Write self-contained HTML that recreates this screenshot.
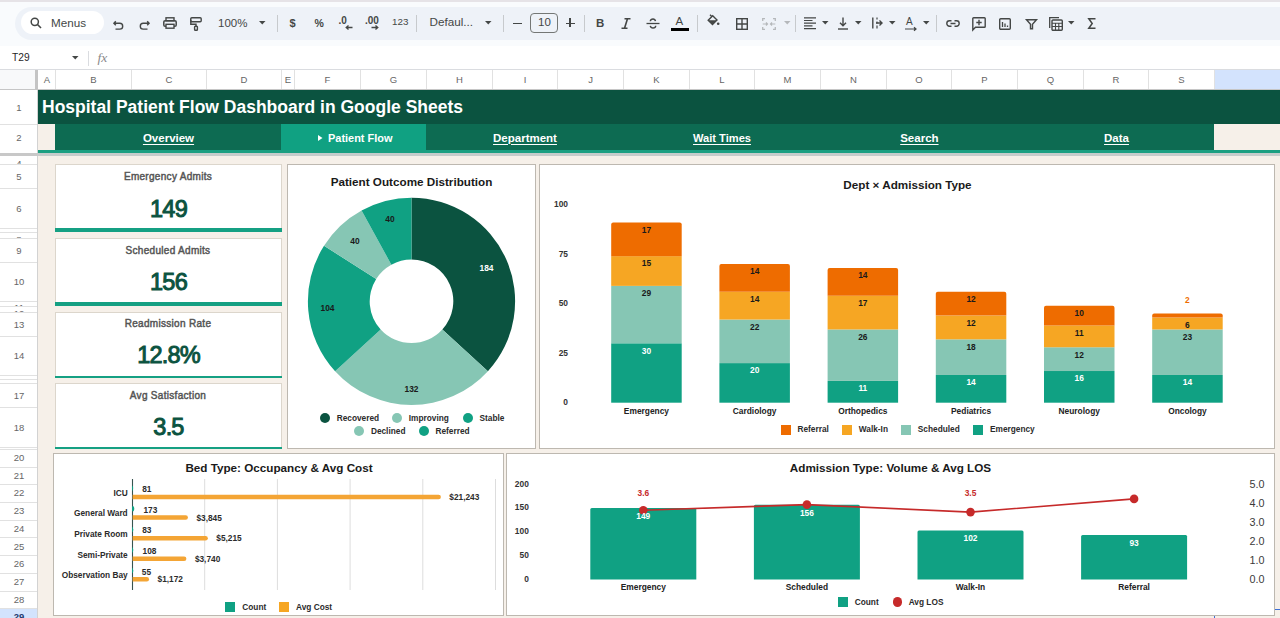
<!DOCTYPE html><html><head><meta charset="utf-8"><style>
*{margin:0;padding:0;box-sizing:border-box}
html,body{width:1280px;height:618px;overflow:hidden;background:#fff;font-family:"Liberation Sans",sans-serif}
.a{position:absolute}
.t{position:absolute;white-space:nowrap}
svg{position:absolute;overflow:visible}
svg text{font-family:"Liberation Sans",sans-serif}
</style></head><body>
<div class="a" style="left:0px;top:0px;width:1280px;height:46px;background:#f9fbfd;"></div>
<div class="a" style="left:0px;top:0px;width:1280px;height:1.5px;background:#e6e3e7;"></div>
<div class="a" style="left:15px;top:7px;width:1300px;height:33px;background:#eef2f8;border-radius:17px"></div>
<div class="a" style="left:21px;top:11px;width:83px;height:23px;background:#ffffff;border-radius:12px"></div>
<svg style="left:30px;top:17px;" width="12" height="12" viewBox="0 0 12 12"><circle cx="4.8" cy="4.8" r="3.6" fill="none" stroke="#444746" stroke-width="1.5"/><path d="M7.5 7.5L11 11" stroke="#444746" stroke-width="1.6"/></svg>
<div class="t" style="left:51px;top:16.5px;font-size:11.7px;color:#444746;font-weight:normal;line-height:1;">Menus</div>
<svg style="left:113px;top:19.5px;" width="11" height="10" viewBox="0 0 11 10"><path d="M2.8 1.2L0.9 3.3L2.8 5.3M1 3.3H6.8a2.9 2.9 0 0 1 0 5.8H2.5" fill="none" stroke="#444746" stroke-width="1.4"/></svg>
<svg style="left:139px;top:19.5px;" width="11" height="10" viewBox="0 0 11 10"><path d="M8.2 1.2L10.1 3.3L8.2 5.3M10 3.3H4.2a2.9 2.9 0 0 0 0 5.8H8.5" fill="none" stroke="#444746" stroke-width="1.4"/></svg>
<svg style="left:163px;top:17px;" width="14" height="12" viewBox="0 0 14 12"><rect x="3" y="0.8" width="8" height="3" fill="none" stroke="#444746" stroke-width="1.4"/><rect x="0.8" y="3.8" width="12.4" height="5.5" rx="1.3" fill="none" stroke="#444746" stroke-width="1.5"/><rect x="3" y="7.3" width="8" height="3.9" fill="#eef2f8" stroke="#444746" stroke-width="1.4"/></svg>
<svg style="left:190px;top:17px;" width="12" height="14" viewBox="0 0 12 14"><rect x="0.8" y="0.8" width="10.4" height="4" rx="1" fill="none" stroke="#444746" stroke-width="1.4"/><path d="M1 3H0.8V7.3H6V9.5" fill="none" stroke="#444746" stroke-width="1.4"/><rect x="4.6" y="9.2" width="2.8" height="4" rx="0.8" fill="none" stroke="#444746" stroke-width="1.4"/></svg>
<div class="t" style="left:218px;top:18.3px;font-size:11.5px;color:#444746;font-weight:normal;line-height:1;">100%</div>
<svg style="left:259px;top:21px;" width="7" height="4" viewBox="0 0 7 4"><path d="M0 0H6.5L3.25 3.6Z" fill="#444746"/></svg>
<div class="a" style="left:277px;top:15px;width:1px;height:17px;background:#c7cacd;"></div>
<div class="t" style="left:289.5px;top:17.5px;font-size:11px;color:#444746;font-weight:normal;line-height:1;"><b>$</b></div>
<div class="t" style="left:314.5px;top:17.5px;font-size:10.5px;color:#444746;font-weight:normal;line-height:1;"><b>%</b></div>
<div class="t" style="left:338.5px;top:15.5px;font-size:10px;color:#444746;font-weight:normal;line-height:1;"><b>.0</b></div>
<svg style="left:345px;top:25px;" width="8" height="5" viewBox="0 0 8 5"><path d="M7.5 2.5H1.5M3.5 0.5L1.2 2.5L3.5 4.5" fill="none" stroke="#444746" stroke-width="1.3"/></svg>
<div class="t" style="left:365px;top:15.5px;font-size:10px;color:#444746;font-weight:normal;line-height:1;"><b>.00</b></div>
<svg style="left:371px;top:25px;" width="8" height="5" viewBox="0 0 8 5"><path d="M0.5 2.5H6.5M4.5 0.5L6.8 2.5L4.5 4.5" fill="none" stroke="#444746" stroke-width="1.3"/></svg>
<div class="t" style="left:392px;top:16.6px;font-size:9.8px;color:#444746;font-weight:normal;line-height:1;">123</div>
<div class="a" style="left:416px;top:15px;width:1px;height:17px;background:#c7cacd;"></div>
<div class="t" style="left:429.5px;top:15.9px;font-size:11.7px;color:#444746;font-weight:normal;line-height:1;">Defaul...</div>
<svg style="left:485px;top:21px;" width="7" height="4" viewBox="0 0 7 4"><path d="M0 0H6.5L3.25 3.6Z" fill="#444746"/></svg>
<div class="a" style="left:503px;top:15px;width:1px;height:17px;background:#c7cacd;"></div>
<div class="a" style="left:512.5px;top:22.5px;width:9px;height:1.2px;background:#444746;"></div>
<div class="a" style="left:530px;top:13px;width:28px;height:20px;background:transparent;border:1px solid #747775;border-radius:4px"></div>
<div class="t" style="left:538px;top:17.3px;font-size:11.5px;color:#444746;font-weight:normal;line-height:1;">10</div>
<div class="a" style="left:565.5px;top:22.5px;width:9px;height:1.3px;background:#444746;"></div>
<div class="a" style="left:569.4px;top:18.3px;width:1.3px;height:9px;background:#444746;"></div>
<div class="a" style="left:584px;top:15px;width:1px;height:17px;background:#c7cacd;"></div>
<div class="t" style="left:596px;top:18.3px;font-size:11.5px;color:#444746;font-weight:normal;line-height:1;"><b>B</b></div>
<svg style="left:621px;top:18px;" width="10" height="11" viewBox="0 0 10 11"><path d="M3.5 0.8H9.5M0.5 10.2H6.5M6.5 0.8L3.5 10.2" fill="none" stroke="#444746" stroke-width="1.6"/></svg>
<svg style="left:646px;top:18px;" width="14" height="11" viewBox="0 0 14 11"><path d="M0.5 5.5H13.5" stroke="#444746" stroke-width="1.3"/><path d="M9.5 3.2C9.2 1.8 8 1 7 1C5.5 1 4.3 1.8 4.3 3.2M4.3 7.8C4.6 9.2 5.8 10 7 10C8.4 10 9.7 9.2 9.7 7.8" fill="none" stroke="#444746" stroke-width="1.4"/></svg>
<div class="t" style="left:675.5px;top:16.3px;font-size:11.5px;color:#444746;font-weight:normal;line-height:1;">A</div>
<div class="a" style="left:671px;top:28px;width:18px;height:2.6px;background:#000;"></div>
<div class="a" style="left:697px;top:15px;width:1px;height:17px;background:#c7cacd;"></div>
<svg style="left:707px;top:14px;" width="13" height="12" viewBox="0 0 13 12"><path d="M3 0.8L4.5 2.3M1.2 6.2L5.7 1.7L10 6L5.5 10.5Z" fill="none" stroke="#444746" stroke-width="1.4"/><path d="M1.5 6.3H9.7L5.5 10.3Z" fill="#444746"/><circle cx="11.2" cy="9.8" r="1.3" fill="#444746"/></svg>
<svg style="left:736px;top:18px;" width="12" height="12" viewBox="0 0 12 12"><rect x="0.7" y="0.7" width="10.6" height="10.6" fill="none" stroke="#444746" stroke-width="1.4"/><path d="M6 0.7V11.3M0.7 6H11.3" stroke="#444746" stroke-width="1.4"/></svg>
<svg style="left:762px;top:18px;" width="14" height="12" viewBox="0 0 14 12"><path d="M0.7 3V0.7H3M0.7 9V11.3H3M13.3 3V0.7H11M13.3 9V11.3H11" fill="none" stroke="#b5b8bb" stroke-width="1.3"/><path d="M0.7 6H5.5M4 4.5L5.5 6L4 7.5M13.3 6H8.5M10 4.5L8.5 6L10 7.5" fill="none" stroke="#b5b8bb" stroke-width="1.2"/></svg>
<svg style="left:783.5px;top:21px;" width="7" height="4" viewBox="0 0 7 4"><path d="M0 0H6.5L3.25 3.6Z" fill="#b5b8bb"/></svg>
<div class="a" style="left:795px;top:15px;width:1px;height:17px;background:#c7cacd;"></div>
<svg style="left:804px;top:17px;" width="12" height="12" viewBox="0 0 12 12"><path d="M0 0.8H12M0 3.5H8.5M0 6.2H12M0 8.9H8.5M0 11.6H12" stroke="#444746" stroke-width="1.2"/></svg>
<svg style="left:822px;top:21px;" width="7" height="4" viewBox="0 0 7 4"><path d="M0 0H6.5L3.25 3.6Z" fill="#444746"/></svg>
<svg style="left:838px;top:17px;" width="10" height="13" viewBox="0 0 10 13"><path d="M5 0.5V8.5M2 5.8L5 8.8L8 5.8" fill="none" stroke="#444746" stroke-width="1.4"/><path d="M0 12H10" stroke="#444746" stroke-width="1.4"/></svg>
<svg style="left:855px;top:21px;" width="7" height="4" viewBox="0 0 7 4"><path d="M0 0H6.5L3.25 3.6Z" fill="#444746"/></svg>
<svg style="left:872px;top:17px;" width="11" height="12" viewBox="0 0 11 12"><path d="M0.8 0.5V11.5" stroke="#444746" stroke-width="1.4"/><path d="M5 0.5V2.5M5 4.5V6.5M5 8.5V11.5" stroke="#444746" stroke-width="1.2"/><path d="M4 6H10M7.5 3.5L10 6L7.5 8.5" fill="none" stroke="#444746" stroke-width="1.4"/></svg>
<svg style="left:889px;top:21px;" width="7" height="4" viewBox="0 0 7 4"><path d="M0 0H6.5L3.25 3.6Z" fill="#444746"/></svg>
<div class="t" style="left:906px;top:17px;font-size:10px;color:#444746;font-weight:normal;line-height:1;">A</div>
<svg style="left:905px;top:27px;" width="12" height="5" viewBox="0 0 12 5"><path d="M0 2H11M9 0.3L11 2L9 3.7" fill="none" stroke="#444746" stroke-width="1.2"/></svg>
<svg style="left:923px;top:21px;" width="7" height="4" viewBox="0 0 7 4"><path d="M0 0H6.5L3.25 3.6Z" fill="#444746"/></svg>
<div class="a" style="left:936px;top:15px;width:1px;height:17px;background:#c7cacd;"></div>
<svg style="left:946px;top:20px;" width="14" height="7" viewBox="0 0 14 7"><path d="M5.5 0.8H3.5a2.7 2.7 0 0 0 0 5.4H5.5M8.5 0.8H10.5a2.7 2.7 0 0 1 0 5.4H8.5M4.5 3.5H9.5" fill="none" stroke="#444746" stroke-width="1.4"/></svg>
<svg style="left:971.5px;top:16.5px;" width="14" height="14" viewBox="0 0 14 14"><path d="M0.8 13V1.5a0.8 0.8 0 0 1 0.8-0.8H12.4a0.8 0.8 0 0 1 0.8 0.8V9.5a0.8 0.8 0 0 1-0.8 0.8H3.5Z" fill="none" stroke="#444746" stroke-width="1.4"/><path d="M7 2.8V8.2M4.3 5.5H9.7" stroke="#444746" stroke-width="1.4"/></svg>
<svg style="left:999px;top:17.5px;" width="12" height="12" viewBox="0 0 12 12"><rect x="0.7" y="0.7" width="10.6" height="10.6" rx="1" fill="none" stroke="#444746" stroke-width="1.4"/><path d="M3.5 4V9M6 5.5V9M8.5 7.5V9" stroke="#444746" stroke-width="1.3"/></svg>
<svg style="left:1026px;top:18.5px;" width="11" height="10" viewBox="0 0 11 10"><path d="M0.5 0.7H10.5L6.5 5.2V9.8H4.5V5.2Z" fill="none" stroke="#444746" stroke-width="1.4"/></svg>
<svg style="left:1049px;top:16.5px;" width="14" height="14" viewBox="0 0 14 14"><path d="M0.7 11V0.7H10" fill="none" stroke="#444746" stroke-width="1.3"/><rect x="3" y="3" width="10.3" height="10.3" rx="1" fill="none" stroke="#444746" stroke-width="1.4"/><path d="M3 6.3H13.3M3 9.5H13.3M6.5 6.3V13.3M9.8 6.3V13.3" stroke="#444746" stroke-width="1.1"/></svg>
<svg style="left:1068px;top:21px;" width="7" height="4" viewBox="0 0 7 4"><path d="M0 0H6.5L3.25 3.6Z" fill="#444746"/></svg>
<svg style="left:1088px;top:18px;" width="8" height="11" viewBox="0 0 8 11"><path d="M7.5 0.8H0.8L4.2 5.5L0.8 10.2H7.5" fill="none" stroke="#444746" stroke-width="1.5" stroke-linejoin="miter"/></svg>
<div class="a" style="left:0px;top:46px;width:1280px;height:24px;background:#ffffff;"></div>
<div class="t" style="left:12px;top:52.5px;font-size:10.2px;color:#1f1f1f;font-weight:normal;line-height:1;">T29</div>
<svg style="left:72px;top:56px;" width="7" height="4" viewBox="0 0 7 4"><path d="M0 0H6.5L3.25 3.6Z" fill="#444746"/></svg>
<div class="a" style="left:88px;top:51px;width:1px;height:15px;background:#dadce0;"></div>
<div class="t" style="left:97.5px;top:51px;font-size:13.5px;color:#8a8a8a;font-weight:normal;line-height:1;font-family:Liberation Serif"><i>fx</i></div>
<div class="a" style="left:0px;top:69px;width:1280px;height:1px;background:#dadce0;"></div>
<div class="a" style="left:0px;top:70px;width:35px;height:20px;background:#f8f9fa;"></div>
<div class="a" style="left:35px;top:70px;width:3px;height:20px;background:#c4c4c4;"></div>
<div class="a" style="left:39px;top:70px;width:17px;height:20px;background:#ffffff;border-right:1px solid #e1e1e1;color:#666;font-size:9.5px;text-align:center;line-height:20px">A</div>
<div class="a" style="left:56px;top:70px;width:76px;height:20px;background:#ffffff;border-right:1px solid #e1e1e1;color:#666;font-size:9.5px;text-align:center;line-height:20px">B</div>
<div class="a" style="left:132px;top:70px;width:75px;height:20px;background:#ffffff;border-right:1px solid #e1e1e1;color:#666;font-size:9.5px;text-align:center;line-height:20px">C</div>
<div class="a" style="left:207px;top:70px;width:75px;height:20px;background:#ffffff;border-right:1px solid #e1e1e1;color:#666;font-size:9.5px;text-align:center;line-height:20px">D</div>
<div class="a" style="left:282px;top:70px;width:13px;height:20px;background:#ffffff;border-right:1px solid #e1e1e1;color:#666;font-size:9.5px;text-align:center;line-height:20px">E</div>
<div class="a" style="left:295px;top:70px;width:66px;height:20px;background:#ffffff;border-right:1px solid #e1e1e1;color:#666;font-size:9.5px;text-align:center;line-height:20px">F</div>
<div class="a" style="left:361px;top:70px;width:66px;height:20px;background:#ffffff;border-right:1px solid #e1e1e1;color:#666;font-size:9.5px;text-align:center;line-height:20px">G</div>
<div class="a" style="left:427px;top:70px;width:66px;height:20px;background:#ffffff;border-right:1px solid #e1e1e1;color:#666;font-size:9.5px;text-align:center;line-height:20px">H</div>
<div class="a" style="left:493px;top:70px;width:65px;height:20px;background:#ffffff;border-right:1px solid #e1e1e1;color:#666;font-size:9.5px;text-align:center;line-height:20px">I</div>
<div class="a" style="left:558px;top:70px;width:66px;height:20px;background:#ffffff;border-right:1px solid #e1e1e1;color:#666;font-size:9.5px;text-align:center;line-height:20px">J</div>
<div class="a" style="left:624px;top:70px;width:66px;height:20px;background:#ffffff;border-right:1px solid #e1e1e1;color:#666;font-size:9.5px;text-align:center;line-height:20px">K</div>
<div class="a" style="left:690px;top:70px;width:65px;height:20px;background:#ffffff;border-right:1px solid #e1e1e1;color:#666;font-size:9.5px;text-align:center;line-height:20px">L</div>
<div class="a" style="left:755px;top:70px;width:66px;height:20px;background:#ffffff;border-right:1px solid #e1e1e1;color:#666;font-size:9.5px;text-align:center;line-height:20px">M</div>
<div class="a" style="left:821px;top:70px;width:66px;height:20px;background:#ffffff;border-right:1px solid #e1e1e1;color:#666;font-size:9.5px;text-align:center;line-height:20px">N</div>
<div class="a" style="left:887px;top:70px;width:65px;height:20px;background:#ffffff;border-right:1px solid #e1e1e1;color:#666;font-size:9.5px;text-align:center;line-height:20px">O</div>
<div class="a" style="left:952px;top:70px;width:66px;height:20px;background:#ffffff;border-right:1px solid #e1e1e1;color:#666;font-size:9.5px;text-align:center;line-height:20px">P</div>
<div class="a" style="left:1018px;top:70px;width:66px;height:20px;background:#ffffff;border-right:1px solid #e1e1e1;color:#666;font-size:9.5px;text-align:center;line-height:20px">Q</div>
<div class="a" style="left:1084px;top:70px;width:65px;height:20px;background:#ffffff;border-right:1px solid #e1e1e1;color:#666;font-size:9.5px;text-align:center;line-height:20px">R</div>
<div class="a" style="left:1149px;top:70px;width:66px;height:20px;background:#ffffff;border-right:1px solid #e1e1e1;color:#666;font-size:9.5px;text-align:center;line-height:20px">S</div>
<div class="a" style="left:1215px;top:70px;width:66px;height:20px;background:#d3e3fd;border-right:1px solid #e1e1e1;color:#666;font-size:9.5px;text-align:center;line-height:20px"></div>
<div class="a" style="left:0px;top:89px;width:1280px;height:1px;background:#c6c6c6;"></div>
<div class="a" style="left:0;top:91px;width:38px;height:34px;background:#ffffff;border-bottom:1px solid #e1e1e1;color:#666;font-size:9.5px;text-align:center;line-height:33px;overflow:hidden;">1</div>
<div class="a" style="left:0;top:125px;width:38px;height:26px;background:#ffffff;border-bottom:1px solid #e1e1e1;color:#666;font-size:9.5px;text-align:center;line-height:25px;overflow:hidden;">2</div>
<div class="a" style="left:0px;top:150px;width:38px;height:6px;background:#ffffff;"></div>
<div class="a" style="left:0;top:157px;width:38px;height:8px;background:#ffffff;border-bottom:1px solid #e1e1e1;color:#666;font-size:9.5px;text-align:center;overflow:hidden"><div style="position:absolute;left:0;width:38px;top:1.5px;line-height:10px">4</div></div>
<div class="a" style="left:0;top:165px;width:38px;height:24px;background:#ffffff;border-bottom:1px solid #e1e1e1;color:#666;font-size:9.5px;text-align:center;line-height:23px;overflow:hidden;">5</div>
<div class="a" style="left:0;top:189px;width:38px;height:40px;background:#ffffff;border-bottom:1px solid #e1e1e1;color:#666;font-size:9.5px;text-align:center;line-height:39px;overflow:hidden;">6</div>
<div class="a" style="left:0;top:229px;width:38px;height:4px;background:#ffffff;border-bottom:1px solid #e1e1e1;color:#666;font-size:9.5px;text-align:center;overflow:hidden"><div style="position:absolute;left:0;width:38px;top:1px;line-height:10px">7</div></div>
<div class="a" style="left:0;top:233px;width:38px;height:6px;background:#ffffff;border-bottom:1px solid #e1e1e1;color:#666;font-size:9.5px;text-align:center;overflow:hidden"><div style="position:absolute;left:0;width:38px;top:1.5px;line-height:10px">8</div></div>
<div class="a" style="left:0;top:239px;width:38px;height:24px;background:#ffffff;border-bottom:1px solid #e1e1e1;color:#666;font-size:9.5px;text-align:center;line-height:23px;overflow:hidden;">9</div>
<div class="a" style="left:0;top:263px;width:38px;height:39px;background:#ffffff;border-bottom:1px solid #e1e1e1;color:#666;font-size:9.5px;text-align:center;line-height:38px;overflow:hidden;">10</div>
<div class="a" style="left:0;top:302px;width:38px;height:5px;background:#ffffff;border-bottom:1px solid #e1e1e1;color:#666;font-size:9.5px;text-align:center;overflow:hidden"><div style="position:absolute;left:0;width:38px;top:1px;line-height:10px">11</div></div>
<div class="a" style="left:0;top:307px;width:38px;height:6px;background:#ffffff;border-bottom:1px solid #e1e1e1;color:#666;font-size:9.5px;text-align:center;overflow:hidden"><div style="position:absolute;left:0;width:38px;top:1.5px;line-height:10px">12</div></div>
<div class="a" style="left:0;top:313px;width:38px;height:24px;background:#ffffff;border-bottom:1px solid #e1e1e1;color:#666;font-size:9.5px;text-align:center;line-height:23px;overflow:hidden;">13</div>
<div class="a" style="left:0;top:337px;width:38px;height:39px;background:#ffffff;border-bottom:1px solid #e1e1e1;color:#666;font-size:9.5px;text-align:center;line-height:38px;overflow:hidden;">14</div>
<div class="a" style="left:0;top:376px;width:38px;height:4px;background:#ffffff;border-bottom:1px solid #e1e1e1;color:#666;font-size:9.5px;text-align:center;overflow:hidden"><div style="position:absolute;left:0;width:38px;top:1px;line-height:10px">15</div></div>
<div class="a" style="left:0;top:380px;width:38px;height:4px;background:#ffffff;border-bottom:1px solid #e1e1e1;color:#666;font-size:9.5px;text-align:center;overflow:hidden"><div style="position:absolute;left:0;width:38px;top:1px;line-height:10px">16</div></div>
<div class="a" style="left:0;top:384px;width:38px;height:24px;background:#ffffff;border-bottom:1px solid #e1e1e1;color:#666;font-size:9.5px;text-align:center;line-height:23px;overflow:hidden;">17</div>
<div class="a" style="left:0;top:408px;width:38px;height:40px;background:#ffffff;border-bottom:1px solid #e1e1e1;color:#666;font-size:9.5px;text-align:center;line-height:39px;overflow:hidden;">18</div>
<div class="a" style="left:0;top:448px;width:38px;height:2px;background:#ffffff;border-bottom:1px solid #e1e1e1;color:#666;font-size:9.5px;text-align:center;overflow:hidden"><div style="position:absolute;left:0;width:38px;top:1px;line-height:10px">19</div></div>
<div class="a" style="left:0;top:450.0px;width:38px;height:17.69999999999999px;background:#ffffff;border-bottom:1px solid #e1e1e1;color:#666;font-size:9.5px;text-align:center;line-height:16.69999999999999px;overflow:hidden;">20</div>
<div class="a" style="left:0;top:467.7px;width:38px;height:17.69999999999999px;background:#ffffff;border-bottom:1px solid #e1e1e1;color:#666;font-size:9.5px;text-align:center;line-height:16.69999999999999px;overflow:hidden;">21</div>
<div class="a" style="left:0;top:485.4px;width:38px;height:17.69999999999999px;background:#ffffff;border-bottom:1px solid #e1e1e1;color:#666;font-size:9.5px;text-align:center;line-height:16.69999999999999px;overflow:hidden;">22</div>
<div class="a" style="left:0;top:503.09999999999997px;width:38px;height:17.69999999999999px;background:#ffffff;border-bottom:1px solid #e1e1e1;color:#666;font-size:9.5px;text-align:center;line-height:16.69999999999999px;overflow:hidden;">23</div>
<div class="a" style="left:0;top:520.8px;width:38px;height:17.700000000000045px;background:#ffffff;border-bottom:1px solid #e1e1e1;color:#666;font-size:9.5px;text-align:center;line-height:16.700000000000045px;overflow:hidden;">24</div>
<div class="a" style="left:0;top:538.5px;width:38px;height:17.700000000000045px;background:#ffffff;border-bottom:1px solid #e1e1e1;color:#666;font-size:9.5px;text-align:center;line-height:16.700000000000045px;overflow:hidden;">25</div>
<div class="a" style="left:0;top:556.2px;width:38px;height:17.700000000000045px;background:#ffffff;border-bottom:1px solid #e1e1e1;color:#666;font-size:9.5px;text-align:center;line-height:16.700000000000045px;overflow:hidden;">26</div>
<div class="a" style="left:0;top:573.9000000000001px;width:38px;height:17.700000000000045px;background:#ffffff;border-bottom:1px solid #e1e1e1;color:#666;font-size:9.5px;text-align:center;line-height:16.700000000000045px;overflow:hidden;">27</div>
<div class="a" style="left:0;top:591.6000000000001px;width:38px;height:17.700000000000045px;background:#ffffff;border-bottom:1px solid #e1e1e1;color:#666;font-size:9.5px;text-align:center;line-height:16.700000000000045px;overflow:hidden;">28</div>
<div class="a" style="left:0;top:609.3000000000002px;width:38px;height:17.700000000000045px;background:#d3e3fd;border-bottom:1px solid #e1e1e1;color:#666;font-size:9.5px;text-align:center;line-height:16.700000000000045px;overflow:hidden;font-weight:bold;color:#1f3a6e;">29</div>
<div class="a" style="left:37px;top:90px;width:1px;height:528px;background:#d2d2d2;"></div>
<div class="a" style="left:0px;top:153px;width:38px;height:3px;background:#c8c8c8;"></div>
<div class="a" style="left:38px;top:90px;width:1242px;height:528px;background:#f6f0e9;"></div>
<div class="a" style="left:38px;top:90px;width:1176px;height:34px;background:#0b5340;"></div>
<div class="a" style="left:1214px;top:90px;width:66px;height:34px;background:#0b5340;"></div>
<div class="t" style="left:42px;top:99.3px;font-size:17.5px;color:#ffffff;font-weight:bold;line-height:1;">Hospital Patient Flow Dashboard in Google Sheets</div>
<div class="a" style="left:55px;top:124px;width:1159px;height:26px;background:#0d6b52;"></div>
<div class="a" style="left:281px;top:124px;width:145px;height:26px;background:#10a182;"></div>
<div class="a" style="left:38px;top:150px;width:1242px;height:3px;background:#1b9f81;"></div>
<div class="a" style="left:38px;top:153px;width:1242px;height:3px;background:#c6cccb;"></div>
<div class="t" style="left:68.5px;width:200px;top:131.5px;text-align:center;font-size:11.5px;color:#fff;font-weight:bold;line-height:12px;text-decoration:underline;text-decoration-thickness:1px;text-underline-offset:1.5px;">Overview</div>
<svg style="left:318px;top:134.5px;" width="5" height="6" viewBox="0 0 5 6"><path d="M0 0L4.5 3L0 6Z" fill="#fff"/></svg>
<div class="t" style="left:328px;top:132.9px;font-size:10.95px;color:#fff;font-weight:bold;line-height:1;">Patient Flow</div>
<div class="t" style="left:425px;width:200px;top:131.5px;text-align:center;font-size:11.5px;color:#fff;font-weight:bold;line-height:12px;text-decoration:underline;text-decoration-thickness:1px;text-underline-offset:1.5px;">Department</div>
<div class="t" style="left:622px;width:200px;top:131.5px;text-align:center;font-size:11.1px;color:#fff;font-weight:bold;line-height:12px;text-decoration:underline;text-decoration-thickness:1px;text-underline-offset:1.5px;">Wait Times</div>
<div class="t" style="left:819.4px;width:200px;top:131.5px;text-align:center;font-size:11.5px;color:#fff;font-weight:bold;line-height:12px;text-decoration:underline;text-decoration-thickness:1px;text-underline-offset:1.5px;">Search</div>
<div class="t" style="left:1016.5px;width:200px;top:131.5px;text-align:center;font-size:11.5px;color:#fff;font-weight:bold;line-height:12px;text-decoration:underline;text-decoration-thickness:1px;text-underline-offset:1.5px;">Data</div>
<div class="a" style="left:55px;top:164px;width:226.5px;height:68px;background:#ffffff;border:1px solid #dcd6cc;border-bottom:none"></div>
<div class="a" style="left:55px;top:228px;width:226.5px;height:4px;background:#15a083;"></div>
<div class="t" style="left:-32px;width:400px;top:172.0px;text-align:center;font-size:10px;color:#555555;font-weight:normal;line-height:10px;letter-spacing:0.3px;-webkit-text-stroke:0.45px #555555">Emergency Admits</div>
<div class="t" style="left:-31.5px;width:400px;top:197.75px;text-align:center;font-size:23.5px;color:#0b5340;font-weight:normal;line-height:23.5px;letter-spacing:-0.8px;-webkit-text-stroke:1px #0b5340">149</div>
<div class="a" style="left:55px;top:238px;width:226.5px;height:68px;background:#ffffff;border:1px solid #dcd6cc;border-bottom:none"></div>
<div class="a" style="left:55px;top:302.3px;width:226.5px;height:3.7px;background:#15a083;"></div>
<div class="t" style="left:-32px;width:400px;top:245.5px;text-align:center;font-size:10px;color:#555555;font-weight:normal;line-height:10px;letter-spacing:0.3px;-webkit-text-stroke:0.45px #555555">Scheduled Admits</div>
<div class="t" style="left:-31.5px;width:400px;top:270.75px;text-align:center;font-size:23.5px;color:#0b5340;font-weight:normal;line-height:23.5px;letter-spacing:-0.8px;-webkit-text-stroke:1px #0b5340">156</div>
<div class="a" style="left:55px;top:312px;width:226.5px;height:65.69999999999999px;background:#ffffff;border:1px solid #dcd6cc;border-bottom:none"></div>
<div class="a" style="left:55px;top:375.5px;width:226.5px;height:2.2px;background:#15a083;"></div>
<div class="t" style="left:-32px;width:400px;top:319.0px;text-align:center;font-size:10px;color:#555555;font-weight:normal;line-height:10px;letter-spacing:0.3px;-webkit-text-stroke:0.45px #555555">Readmission Rate</div>
<div class="t" style="left:-31.5px;width:400px;top:344.25px;text-align:center;font-size:23.5px;color:#0b5340;font-weight:normal;line-height:23.5px;letter-spacing:-0.8px;-webkit-text-stroke:1px #0b5340">12.8%</div>
<div class="a" style="left:55px;top:383px;width:226.5px;height:66.19999999999999px;background:#ffffff;border:1px solid #dcd6cc;border-bottom:none"></div>
<div class="a" style="left:55px;top:447.0px;width:226.5px;height:2.2px;background:#15a083;"></div>
<div class="t" style="left:-32px;width:400px;top:390.5px;text-align:center;font-size:10px;color:#555555;font-weight:normal;line-height:10px;letter-spacing:0.3px;-webkit-text-stroke:0.45px #555555">Avg Satisfaction</div>
<div class="t" style="left:-31.5px;width:400px;top:415.95px;text-align:center;font-size:23.5px;color:#0b5340;font-weight:normal;line-height:23.5px;letter-spacing:-0.8px;-webkit-text-stroke:1px #0b5340">3.5</div>
<div class="a" style="left:1214px;top:608.5px;width:66px;height:10px;background:transparent;border-top:1.5px solid #3d6fd6;border-left:1.5px solid #3d6fd6"></div>
<div class="a" style="left:287px;top:164px;width:249px;height:285px;background:#ffffff;border:1px solid #bdb8b0"></div>
<div class="a" style="left:539px;top:164px;width:736px;height:285px;background:#ffffff;border:1px solid #bdb8b0"></div>
<div class="a" style="left:53px;top:453px;width:451px;height:163px;background:#ffffff;border:1px solid #bdb8b0"></div>
<div class="a" style="left:506px;top:453px;width:769px;height:163px;background:#ffffff;border:1px solid #bdb8b0"></div>
<svg style="left:0;top:0" width="1280" height="618" viewBox="0 0 1280 618"><path d="M411.50 197.70A103.6 103.6 0 0 1 487.91 371.26L442.33 329.53A41.8 41.8 0 0 0 411.50 259.50Z" fill="#0b5340"/><path d="M487.91 371.26A103.6 103.6 0 0 1 335.09 371.26L380.67 329.53A41.8 41.8 0 0 0 442.33 329.53Z" fill="#86c6b4"/><path d="M335.09 371.26A103.6 103.6 0 0 1 324.03 245.79L376.21 278.90A41.8 41.8 0 0 0 380.67 329.53Z" fill="#10a183"/><path d="M324.03 245.79A103.6 103.6 0 0 1 361.59 210.51L391.36 264.67A41.8 41.8 0 0 0 376.21 278.90Z" fill="#86c6b4"/><path d="M361.59 210.51A103.6 103.6 0 0 1 411.50 197.70L411.50 259.50A41.8 41.8 0 0 0 391.36 264.67Z" fill="#10a183"/></svg>
<div class="t" style="left:211.5px;width:400px;top:176.15px;text-align:center;font-size:11.7px;color:#1a1a1a;font-weight:bold;line-height:11.7px;">Patient Outcome Distribution</div>
<div class="t" style="left:286.5px;width:400px;top:264.3px;text-align:center;font-size:8.4px;color:#ffffff;font-weight:bold;line-height:8.4px;">184</div>
<div class="t" style="left:190px;width:400px;top:214.8px;text-align:center;font-size:8.4px;color:#1a1a1a;font-weight:bold;line-height:8.4px;">40</div>
<div class="t" style="left:155px;width:400px;top:236.8px;text-align:center;font-size:8.4px;color:#1a1a1a;font-weight:bold;line-height:8.4px;">40</div>
<div class="t" style="left:127.5px;width:400px;top:304.3px;text-align:center;font-size:8.4px;color:#1a1a1a;font-weight:bold;line-height:8.4px;">104</div>
<div class="t" style="left:211.5px;width:400px;top:384.8px;text-align:center;font-size:8.4px;color:#1a1a1a;font-weight:bold;line-height:8.4px;">132</div>
<div class="a" style="left:319.7px;top:413px;width:10px;height:10px;border-radius:5px;background:#0b5340"></div>
<div class="t" style="left:336.7px;top:413.6px;font-size:8.3px;color:#2b2b2b;font-weight:bold;line-height:1;">Recovered</div>
<div class="a" style="left:391.8px;top:413px;width:10px;height:10px;border-radius:5px;background:#86c6b4"></div>
<div class="t" style="left:408.8px;top:413.6px;font-size:8.3px;color:#2b2b2b;font-weight:bold;line-height:1;">Improving</div>
<div class="a" style="left:462.5px;top:413px;width:10px;height:10px;border-radius:5px;background:#10a183"></div>
<div class="t" style="left:479.5px;top:413.6px;font-size:8.3px;color:#2b2b2b;font-weight:bold;line-height:1;">Stable</div>
<div class="a" style="left:353.9px;top:426.4px;width:10px;height:10px;border-radius:5px;background:#86c6b4"></div>
<div class="t" style="left:370.9px;top:427.0px;font-size:8.3px;color:#2b2b2b;font-weight:bold;line-height:1;">Declined</div>
<div class="a" style="left:418.5px;top:426.4px;width:10px;height:10px;border-radius:5px;background:#10a183"></div>
<div class="t" style="left:435.5px;top:427.0px;font-size:8.3px;color:#2b2b2b;font-weight:bold;line-height:1;">Referred</div>
<div class="t" style="left:707.5px;width:400px;top:178.65px;text-align:center;font-size:11.7px;color:#1a1a1a;font-weight:bold;line-height:11.7px;">Dept &times; Admission Type</div>
<div class="t" style="left:468px;width:100px;top:200.2px;text-align:right;font-size:8.4px;font-weight:bold;color:#333;line-height:9px">100</div>
<div class="t" style="left:468px;width:100px;top:249.7px;text-align:right;font-size:8.4px;font-weight:bold;color:#333;line-height:9px">75</div>
<div class="t" style="left:468px;width:100px;top:299.2px;text-align:right;font-size:8.4px;font-weight:bold;color:#333;line-height:9px">50</div>
<div class="t" style="left:468px;width:100px;top:348.7px;text-align:right;font-size:8.4px;font-weight:bold;color:#333;line-height:9px">25</div>
<div class="t" style="left:468px;width:100px;top:398.2px;text-align:right;font-size:8.4px;font-weight:bold;color:#333;line-height:9px">0</div>
<svg style="left:0;top:0" width="1280" height="618" viewBox="0 0 1280 618"><rect x="611.20" y="343.30" width="70.5" height="59.40" fill="#10a183"/><rect x="611.20" y="285.88" width="70.5" height="57.42" fill="#86c6b4"/><rect x="611.20" y="256.18" width="70.5" height="29.70" fill="#f6a623"/><path d="M611.20 256.18V224.52Q611.20 222.52 613.20 222.52H679.70Q681.70 222.52 681.70 224.52V256.18Z" fill="#ee6c00"/><rect x="719.40" y="363.10" width="70.5" height="39.60" fill="#10a183"/><rect x="719.40" y="319.54" width="70.5" height="43.56" fill="#86c6b4"/><rect x="719.40" y="291.82" width="70.5" height="27.72" fill="#f6a623"/><path d="M719.40 291.82V266.10Q719.40 264.10 721.40 264.10H787.90Q789.90 264.10 789.90 266.10V291.82Z" fill="#ee6c00"/><rect x="827.60" y="380.92" width="70.5" height="21.78" fill="#10a183"/><rect x="827.60" y="329.44" width="70.5" height="51.48" fill="#86c6b4"/><rect x="827.60" y="295.78" width="70.5" height="33.66" fill="#f6a623"/><path d="M827.60 295.78V270.06Q827.60 268.06 829.60 268.06H896.10Q898.10 268.06 898.10 270.06V295.78Z" fill="#ee6c00"/><rect x="935.80" y="374.98" width="70.5" height="27.72" fill="#10a183"/><rect x="935.80" y="339.34" width="70.5" height="35.64" fill="#86c6b4"/><rect x="935.80" y="315.58" width="70.5" height="23.76" fill="#f6a623"/><path d="M935.80 315.58V293.82Q935.80 291.82 937.80 291.82H1004.30Q1006.30 291.82 1006.30 293.82V315.58Z" fill="#ee6c00"/><rect x="1044.00" y="371.02" width="70.5" height="31.68" fill="#10a183"/><rect x="1044.00" y="347.26" width="70.5" height="23.76" fill="#86c6b4"/><rect x="1044.00" y="325.48" width="70.5" height="21.78" fill="#f6a623"/><path d="M1044.00 325.48V307.68Q1044.00 305.68 1046.00 305.68H1112.50Q1114.50 305.68 1114.50 307.68V325.48Z" fill="#ee6c00"/><rect x="1152.20" y="374.98" width="70.5" height="27.72" fill="#10a183"/><rect x="1152.20" y="329.44" width="70.5" height="45.54" fill="#86c6b4"/><rect x="1152.20" y="317.56" width="70.5" height="11.88" fill="#f6a623"/><path d="M1152.20 317.56V315.60Q1152.20 313.60 1154.20 313.60H1220.70Q1222.70 313.60 1222.70 315.60V317.56Z" fill="#ee6c00"/></svg>
<div class="t" style="left:446.45000000000005px;width:400px;top:346.6px;text-align:center;font-size:8.4px;color:#ffffff;font-weight:bold;line-height:8.4px;">30</div>
<div class="t" style="left:446.45000000000005px;width:400px;top:289.18px;text-align:center;font-size:8.4px;color:#1a1a1a;font-weight:bold;line-height:8.4px;">29</div>
<div class="t" style="left:446.45000000000005px;width:400px;top:259.48px;text-align:center;font-size:8.4px;color:#1a1a1a;font-weight:bold;line-height:8.4px;">15</div>
<div class="t" style="left:446.45000000000005px;width:400px;top:225.82000000000002px;text-align:center;font-size:8.4px;color:#1a1a1a;font-weight:bold;line-height:8.4px;">17</div>
<div class="t" style="left:446.45000000000005px;width:400px;top:406.8px;text-align:center;font-size:8.4px;color:#222;font-weight:bold;line-height:8.4px;">Emergency</div>
<div class="t" style="left:554.6500000000001px;width:400px;top:366.4px;text-align:center;font-size:8.4px;color:#ffffff;font-weight:bold;line-height:8.4px;">20</div>
<div class="t" style="left:554.6500000000001px;width:400px;top:322.84px;text-align:center;font-size:8.4px;color:#1a1a1a;font-weight:bold;line-height:8.4px;">22</div>
<div class="t" style="left:554.6500000000001px;width:400px;top:295.11999999999995px;text-align:center;font-size:8.4px;color:#1a1a1a;font-weight:bold;line-height:8.4px;">14</div>
<div class="t" style="left:554.6500000000001px;width:400px;top:267.3999999999999px;text-align:center;font-size:8.4px;color:#1a1a1a;font-weight:bold;line-height:8.4px;">14</div>
<div class="t" style="left:554.6500000000001px;width:400px;top:406.8px;text-align:center;font-size:8.4px;color:#222;font-weight:bold;line-height:8.4px;">Cardiology</div>
<div class="t" style="left:662.85px;width:400px;top:384.21999999999997px;text-align:center;font-size:8.4px;color:#ffffff;font-weight:bold;line-height:8.4px;">11</div>
<div class="t" style="left:662.85px;width:400px;top:332.73999999999995px;text-align:center;font-size:8.4px;color:#1a1a1a;font-weight:bold;line-height:8.4px;">26</div>
<div class="t" style="left:662.85px;width:400px;top:299.08px;text-align:center;font-size:8.4px;color:#1a1a1a;font-weight:bold;line-height:8.4px;">17</div>
<div class="t" style="left:662.85px;width:400px;top:271.35999999999996px;text-align:center;font-size:8.4px;color:#1a1a1a;font-weight:bold;line-height:8.4px;">14</div>
<div class="t" style="left:662.85px;width:400px;top:406.8px;text-align:center;font-size:8.4px;color:#222;font-weight:bold;line-height:8.4px;">Orthopedics</div>
<div class="t" style="left:771.0500000000001px;width:400px;top:378.28000000000003px;text-align:center;font-size:8.4px;color:#ffffff;font-weight:bold;line-height:8.4px;">14</div>
<div class="t" style="left:771.0500000000001px;width:400px;top:342.64000000000004px;text-align:center;font-size:8.4px;color:#1a1a1a;font-weight:bold;line-height:8.4px;">18</div>
<div class="t" style="left:771.0500000000001px;width:400px;top:318.88000000000005px;text-align:center;font-size:8.4px;color:#1a1a1a;font-weight:bold;line-height:8.4px;">12</div>
<div class="t" style="left:771.0500000000001px;width:400px;top:295.12000000000006px;text-align:center;font-size:8.4px;color:#1a1a1a;font-weight:bold;line-height:8.4px;">12</div>
<div class="t" style="left:771.0500000000001px;width:400px;top:406.8px;text-align:center;font-size:8.4px;color:#222;font-weight:bold;line-height:8.4px;">Pediatrics</div>
<div class="t" style="left:879.25px;width:400px;top:374.32px;text-align:center;font-size:8.4px;color:#ffffff;font-weight:bold;line-height:8.4px;">16</div>
<div class="t" style="left:879.25px;width:400px;top:350.56px;text-align:center;font-size:8.4px;color:#1a1a1a;font-weight:bold;line-height:8.4px;">12</div>
<div class="t" style="left:879.25px;width:400px;top:328.78000000000003px;text-align:center;font-size:8.4px;color:#1a1a1a;font-weight:bold;line-height:8.4px;">11</div>
<div class="t" style="left:879.25px;width:400px;top:308.98px;text-align:center;font-size:8.4px;color:#1a1a1a;font-weight:bold;line-height:8.4px;">10</div>
<div class="t" style="left:879.25px;width:400px;top:406.8px;text-align:center;font-size:8.4px;color:#222;font-weight:bold;line-height:8.4px;">Neurology</div>
<div class="t" style="left:987.45px;width:400px;top:378.28000000000003px;text-align:center;font-size:8.4px;color:#ffffff;font-weight:bold;line-height:8.4px;">14</div>
<div class="t" style="left:987.45px;width:400px;top:332.74px;text-align:center;font-size:8.4px;color:#1a1a1a;font-weight:bold;line-height:8.4px;">23</div>
<div class="t" style="left:987.45px;width:400px;top:320.86px;text-align:center;font-size:8.4px;color:#1a1a1a;font-weight:bold;line-height:8.4px;">6</div>
<div class="t" style="left:987.45px;width:400px;top:296.40000000000003px;text-align:center;font-size:8.4px;color:#ee6c00;font-weight:bold;line-height:8.4px;">2</div>
<div class="t" style="left:987.45px;width:400px;top:406.8px;text-align:center;font-size:8.4px;color:#222;font-weight:bold;line-height:8.4px;">Oncology</div>
<div class="a" style="left:780.5px;top:424.5px;width:10px;height:10px;background:#ee6c00;"></div>
<div class="t" style="left:797.5px;top:425.2px;font-size:8.3px;color:#2b2b2b;font-weight:bold;line-height:1;">Referral</div>
<div class="a" style="left:841.8px;top:424.5px;width:10px;height:10px;background:#f6a623;"></div>
<div class="t" style="left:858.8px;top:425.2px;font-size:8.3px;color:#2b2b2b;font-weight:bold;line-height:1;">Walk-In</div>
<div class="a" style="left:900.8px;top:424.5px;width:10px;height:10px;background:#86c6b4;"></div>
<div class="t" style="left:917.8px;top:425.2px;font-size:8.3px;color:#2b2b2b;font-weight:bold;line-height:1;">Scheduled</div>
<div class="a" style="left:973px;top:424.5px;width:10px;height:10px;background:#10a183;"></div>
<div class="t" style="left:990px;top:425.2px;font-size:8.3px;color:#2b2b2b;font-weight:bold;line-height:1;">Emergency</div>
<div class="t" style="left:79px;width:400px;top:462.15px;text-align:center;font-size:11.7px;color:#1a1a1a;font-weight:bold;line-height:11.7px;">Bed Type: Occupancy &amp; Avg Cost</div>
<svg style="left:0;top:0" width="1280" height="618" viewBox="0 0 1280 618"><path d="M204.7 479V590" stroke="#dddddd" stroke-width="1"/><path d="M277.4 479V590" stroke="#dddddd" stroke-width="1"/><path d="M350.1 479V590" stroke="#dddddd" stroke-width="1"/><path d="M422.8 479V590" stroke="#dddddd" stroke-width="1"/><path d="M495.5 479V590" stroke="#dddddd" stroke-width="1"/><path d="M132.5 479V590" stroke="#38534f" stroke-width="1.1"/><path d="M132.6 494.70H438.62A2.25 2.25 0 0 1 438.62 499.20H132.6Z" fill="#f4a535"/><path d="M132 485.70H132.50Q134.00 488.20 132.50 490.70H132Z" fill="#10a183"/><path d="M132.6 515.30H185.66A2.25 2.25 0 0 1 185.66 519.80H132.6Z" fill="#f4a535"/><path d="M132 506.30H133.52Q135.02 508.80 133.52 511.30H132Z" fill="#10a183"/><path d="M132.6 535.90H205.58A2.25 2.25 0 0 1 205.58 540.40H132.6Z" fill="#f4a535"/><path d="M132 526.90H132.50Q134.00 529.40 132.50 531.90H132Z" fill="#10a183"/><path d="M132.6 556.50H184.13A2.25 2.25 0 0 1 184.13 561.00H132.6Z" fill="#f4a535"/><path d="M132 547.50H132.57Q134.07 550.00 132.57 552.50H132Z" fill="#10a183"/><path d="M132.6 577.10H146.79A2.25 2.25 0 0 1 146.79 581.60H132.6Z" fill="#f4a535"/><path d="M132 568.10H132.50Q134.00 570.60 132.50 573.10H132Z" fill="#10a183"/></svg>
<div class="t" style="left:27.7px;width:100px;top:488.8px;text-align:right;font-size:8.3px;font-weight:bold;color:#2b2b2b;line-height:9px">ICU</div>
<div class="t" style="left:142.17774px;top:485.2px;font-size:8.3px;color:#2b2b2b;font-weight:bold;line-height:1;">81</div>
<div class="t" style="left:449.37322px;top:493.0px;font-size:8.3px;color:#2b2b2b;font-weight:bold;line-height:1;">$21,243</div>
<div class="t" style="left:27.7px;width:100px;top:509.4px;text-align:right;font-size:8.3px;font-weight:bold;color:#2b2b2b;line-height:9px">General Ward</div>
<div class="t" style="left:143.51542px;top:505.79999999999995px;font-size:8.3px;color:#2b2b2b;font-weight:bold;line-height:1;">173</div>
<div class="t" style="left:196.4063px;top:513.5999999999999px;font-size:8.3px;color:#2b2b2b;font-weight:bold;line-height:1;">$3,845</div>
<div class="t" style="left:27.7px;width:100px;top:530.0px;text-align:right;font-size:8.3px;font-weight:bold;color:#2b2b2b;line-height:9px">Private Room</div>
<div class="t" style="left:142.20682px;top:526.4px;font-size:8.3px;color:#2b2b2b;font-weight:bold;line-height:1;">83</div>
<div class="t" style="left:216.3261px;top:534.1999999999999px;font-size:8.3px;color:#2b2b2b;font-weight:bold;line-height:1;">$5,215</div>
<div class="t" style="left:27.7px;width:100px;top:550.6px;text-align:right;font-size:8.3px;font-weight:bold;color:#2b2b2b;line-height:9px">Semi-Private</div>
<div class="t" style="left:142.57032px;top:547.0px;font-size:8.3px;color:#2b2b2b;font-weight:bold;line-height:1;">108</div>
<div class="t" style="left:194.8796px;top:554.8px;font-size:8.3px;color:#2b2b2b;font-weight:bold;line-height:1;">$3,740</div>
<div class="t" style="left:27.7px;width:100px;top:571.2px;text-align:right;font-size:8.3px;font-weight:bold;color:#2b2b2b;line-height:9px">Observation Bay</div>
<div class="t" style="left:141.7997px;top:567.6px;font-size:8.3px;color:#2b2b2b;font-weight:bold;line-height:1;">55</div>
<div class="t" style="left:157.54088000000002px;top:575.4px;font-size:8.3px;color:#2b2b2b;font-weight:bold;line-height:1;">$1,172</div>
<div class="a" style="left:225.3px;top:602px;width:10px;height:10px;background:#10a183;"></div>
<div class="t" style="left:242.3px;top:602.7px;font-size:8.3px;color:#2b2b2b;font-weight:bold;line-height:1;">Count</div>
<div class="a" style="left:279px;top:602px;width:10px;height:10px;background:#f6a623;"></div>
<div class="t" style="left:296px;top:602.7px;font-size:8.3px;color:#2b2b2b;font-weight:bold;line-height:1;">Avg Cost</div>
<div class="t" style="left:690.5px;width:400px;top:462.15px;text-align:center;font-size:11.7px;color:#1a1a1a;font-weight:bold;line-height:11.7px;">Admission Type: Volume &amp; Avg LOS</div>
<div class="t" style="left:428.8px;width:100px;top:479.5px;text-align:right;font-size:8.4px;font-weight:bold;color:#333;line-height:9px">200</div>
<div class="t" style="left:428.8px;width:100px;top:503.35px;text-align:right;font-size:8.4px;font-weight:bold;color:#333;line-height:9px">150</div>
<div class="t" style="left:428.8px;width:100px;top:527.2px;text-align:right;font-size:8.4px;font-weight:bold;color:#333;line-height:9px">100</div>
<div class="t" style="left:428.8px;width:100px;top:551.05px;text-align:right;font-size:8.4px;font-weight:bold;color:#333;line-height:9px">50</div>
<div class="t" style="left:428.8px;width:100px;top:574.9px;text-align:right;font-size:8.4px;font-weight:bold;color:#333;line-height:9px">0</div>
<div class="t" style="left:1249.5px;top:478.85px;font-size:10.8px;color:#3a3a3a;font-weight:normal;line-height:1;">5.0</div>
<div class="t" style="left:1249.5px;top:497.78000000000003px;font-size:10.8px;color:#3a3a3a;font-weight:normal;line-height:1;">4.0</div>
<div class="t" style="left:1249.5px;top:516.71px;font-size:10.8px;color:#3a3a3a;font-weight:normal;line-height:1;">3.0</div>
<div class="t" style="left:1249.5px;top:535.64px;font-size:10.8px;color:#3a3a3a;font-weight:normal;line-height:1;">2.0</div>
<div class="t" style="left:1249.5px;top:554.57px;font-size:10.8px;color:#3a3a3a;font-weight:normal;line-height:1;">1.0</div>
<div class="t" style="left:1249.5px;top:573.5px;font-size:10.8px;color:#3a3a3a;font-weight:normal;line-height:1;">0.0</div>
<svg style="left:0;top:0" width="1280" height="618" viewBox="0 0 1280 618"><path d="M590.3 579.4V509.6Q590.3 508.1 591.8 508.1H694.8Q696.3 508.1 696.3 509.6V579.4Z" fill="#10a183"/><path d="M753.9 579.4V506.3Q753.9 504.8 755.4 504.8H858.4Q859.9 504.8 859.9 506.3V579.4Z" fill="#10a183"/><path d="M917.5 579.4V532.1Q917.5 530.6 919.0 530.6H1022.0Q1023.5 530.6 1023.5 532.1V579.4Z" fill="#10a183"/><path d="M1081.1 579.4V536.4Q1081.1 534.9 1082.6 534.9H1185.6Q1187.1 534.9 1187.1 536.4V579.4Z" fill="#10a183"/><path d="M643.3 510.3 L806.9 504.6 L970.5 512.1 L1134.1 498.9" fill="none" stroke="#c62a2a" stroke-width="1.6"/><circle cx="643.3" cy="510.3" r="4.3" fill="#c62a2a"/><circle cx="806.9" cy="504.6" r="4.3" fill="#c62a2a"/><circle cx="970.5" cy="512.1" r="4.3" fill="#c62a2a"/><circle cx="1134.1" cy="498.9" r="4.3" fill="#c62a2a"/></svg>
<div class="t" style="left:443.29999999999995px;width:400px;top:511.90349999999995px;text-align:center;font-size:8.4px;color:#ffffff;font-weight:bold;line-height:8.4px;">149</div>
<div class="t" style="left:443.29999999999995px;width:400px;top:582.8px;text-align:center;font-size:8.4px;color:#222;font-weight:bold;line-height:8.4px;">Emergency</div>
<div class="t" style="left:606.9px;width:400px;top:508.5539999999999px;text-align:center;font-size:8.4px;color:#ffffff;font-weight:bold;line-height:8.4px;">156</div>
<div class="t" style="left:606.9px;width:400px;top:582.8px;text-align:center;font-size:8.4px;color:#222;font-weight:bold;line-height:8.4px;">Scheduled</div>
<div class="t" style="left:770.5px;width:400px;top:534.3929999999999px;text-align:center;font-size:8.4px;color:#ffffff;font-weight:bold;line-height:8.4px;">102</div>
<div class="t" style="left:770.5px;width:400px;top:582.8px;text-align:center;font-size:8.4px;color:#222;font-weight:bold;line-height:8.4px;">Walk-In</div>
<div class="t" style="left:934.0999999999999px;width:400px;top:538.6995px;text-align:center;font-size:8.4px;color:#ffffff;font-weight:bold;line-height:8.4px;">93</div>
<div class="t" style="left:934.0999999999999px;width:400px;top:582.8px;text-align:center;font-size:8.4px;color:#222;font-weight:bold;line-height:8.4px;">Referral</div>
<div class="t" style="left:443.29999999999995px;width:400px;top:489.1px;text-align:center;font-size:8.4px;color:#c62a2a;font-weight:bold;line-height:8.4px;">3.6</div>
<div class="t" style="left:770.5px;width:400px;top:489.1px;text-align:center;font-size:8.4px;color:#c62a2a;font-weight:bold;line-height:8.4px;">3.5</div>
<div class="a" style="left:838.4px;top:597.2px;width:9.5px;height:10px;background:#10a183;"></div>
<div class="t" style="left:854.7px;top:598px;font-size:8.3px;color:#2b2b2b;font-weight:bold;line-height:1;">Count</div>
<div class="a" style="left:892.5px;top:597.2px;width:9.5px;height:9.5px;border-radius:5px;background:#c62a2a"></div>
<div class="t" style="left:908.7px;top:598px;font-size:8.3px;color:#2b2b2b;font-weight:bold;line-height:1;">Avg LOS</div>
</body></html>
